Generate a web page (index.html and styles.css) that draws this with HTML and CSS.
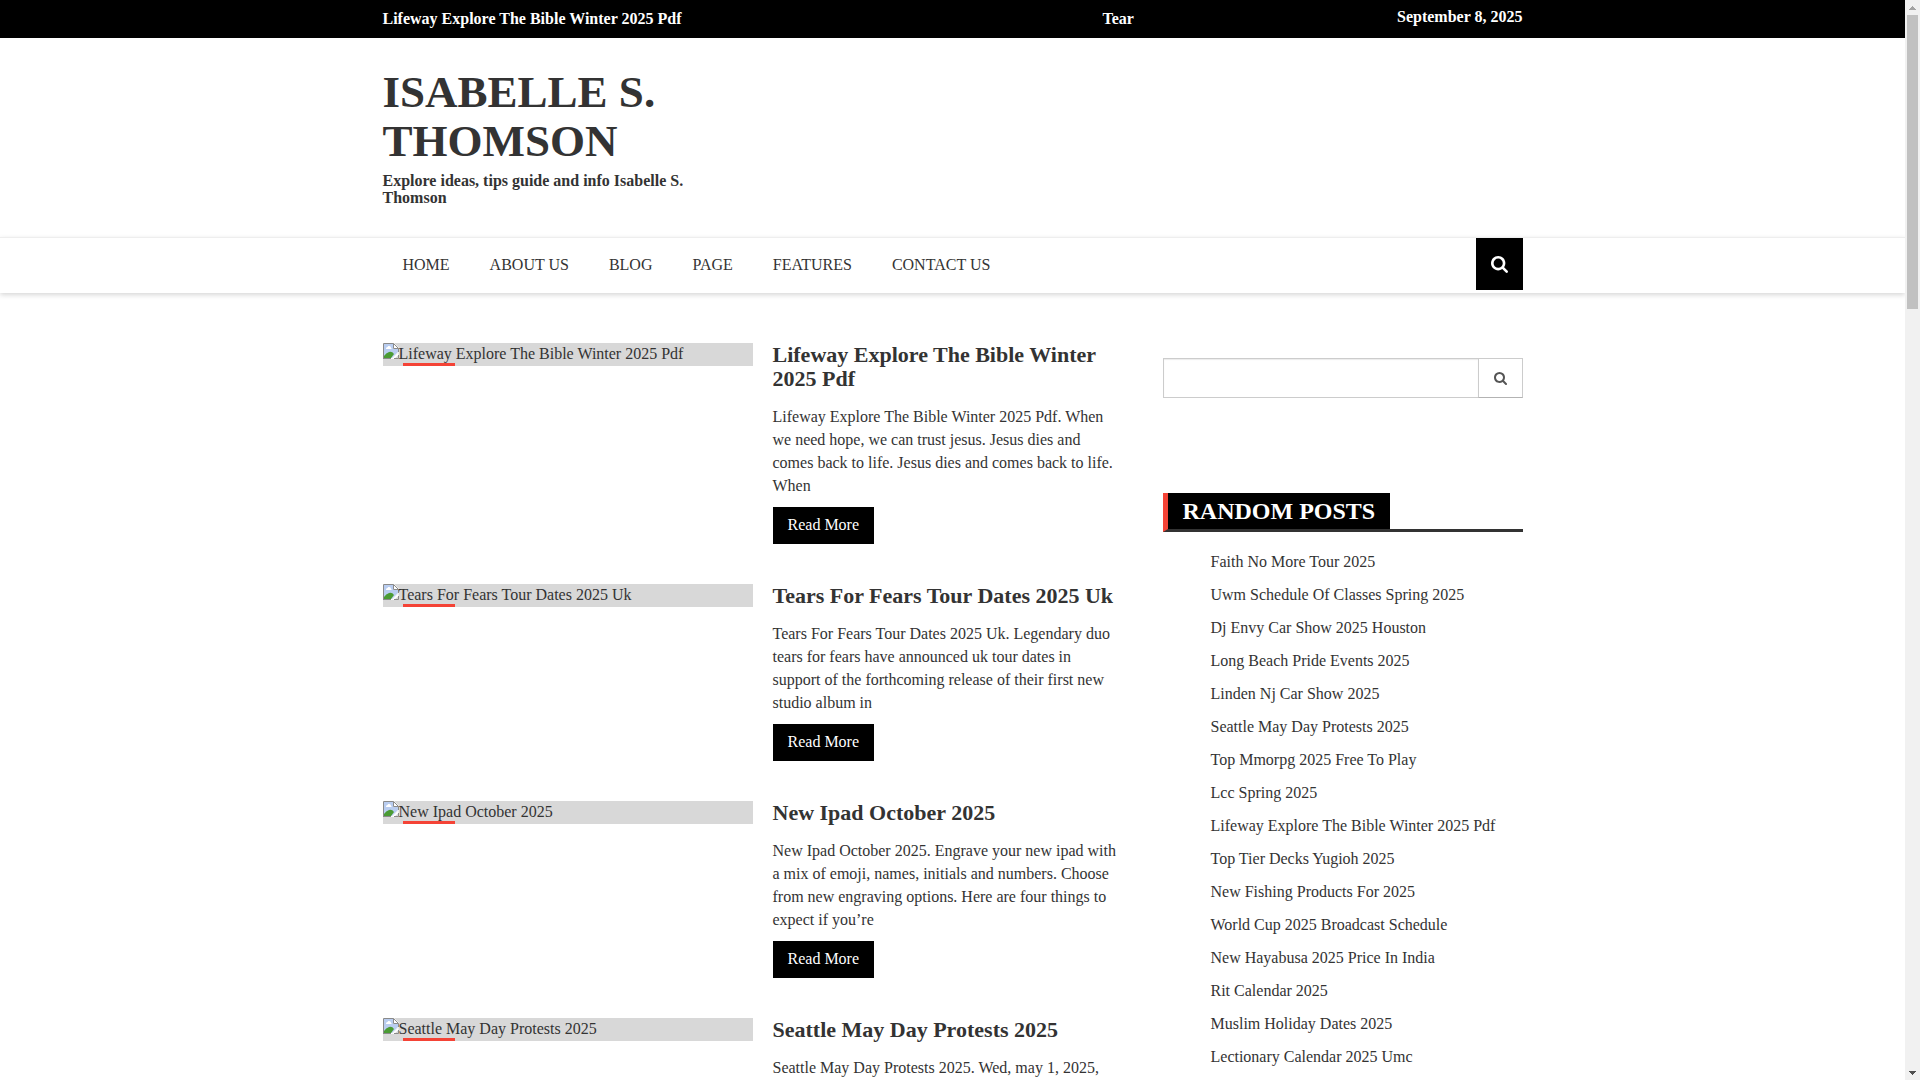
FILE: index.html
```
<!DOCTYPE html>
<html lang="en">
<head>
  <meta charset="UTF-8">
  <meta name="viewport" content="width=device-width, initial-scale=1">
  <title>Isabelle S. Thomson</title>
  <link rel="stylesheet" href="styles.css">
</head>
<body>
  <!-- Shared icons -->
  <svg class="sprite" aria-hidden="true">
    <symbol id="icon-search" viewBox="64 128 1664 1664">
      <path fill="currentColor" d="M1216 832q0-185-131.500-316.500t-316.500-131.500-316.500 131.500-131.500 316.500 131.500 316.500 316.500 131.500 316.500-131.500 131.500-316.500zm512 832q0 52-38 90t-90 38q-54 0-90-38l-343-342q-179 124-399 124-143 0-273.500-55.500t-225-150-150-225-55.500-273.500 55.500-273.500 150-225 225-150 273.500-55.500 273.500 55.500 225 150 150 225 55.500 273.500q0 220-124 399l343 343q37 37 37 90z"/>
    </symbol>
    <symbol id="icon-image" viewBox="0 0 16 16">
      <path fill="#fff" d="M0 0h11l5 5v4L9 16H0z"/>
      <path fill="#b9cdf0" d="M1 1h9v5h5v3l-6 6H1z"/>
      <path fill="#fff" d="M3 5.500q0-1.500 1.500-1.500Q5 2.500 6.200 3 8 3 7.800 4.500 9 5 8.500 6H3.500Q3 6 3 5.500z"/>
      <path fill="#4a9b34" d="M1 15v-2q2-3 5-4 3-1 5 2l-3 4z"/>
      <path fill="#fff" d="M15.500 9.500 9 16h2l4.500-4z"/>
      <path fill="none" stroke="#8a8a8a" d="M.5 16V.5h10l5 5V9M10.500.5v5h5M.5 15.500H8M11 15.500h4.500V12"/>
    </symbol>
  </svg>

  <div class="page">
    <div class="topbar">
      <div class="container topbar-inner">
        <div class="ticker">
          <a href="#">Lifeway Explore The Bible Winter 2025 Pdf</a>
          <a href="#">Tear</a>
        </div>
        <div class="date">September 8, 2025</div>
      </div>
    </div>

    <header class="header">
      <div class="container">
        <div class="branding">
          <h1><a href="#">Isabelle S. Thomson</a></h1>
          <h4>Explore ideas, tips guide and info Isabelle S. Thomson</h4>
        </div>
      </div>
    </header>

    <nav class="navbar">
      <div class="container navbar-inner">
        <ul class="menu">
          <li><a href="#">Home</a></li>
          <li><a href="#">About Us</a></li>
          <li><a href="#">Blog</a></li>
          <li><a href="#">Page</a></li>
          <li><a href="#">Features</a></li>
          <li><a href="#">Contact Us</a></li>
        </ul>
        <button class="nav-search" type="button" aria-label="Open search">
          <svg><use href="#icon-search"/></svg>
        </button>
      </div>
    </nav>

    <div class="container content">
      <main class="posts">
        <article class="post">
          <a class="thumb" href="#"><svg><use href="#icon-image"/></svg>Lifeway Explore The Bible Winter 2025 Pdf</a>
          <div class="post-body">
            <h2><a href="#">Lifeway Explore The Bible Winter 2025 Pdf</a></h2>
            <p>Lifeway Explore The Bible Winter 2025 Pdf. When we need hope, we can trust jesus. Jesus dies and comes back to life. Jesus dies and comes back to life. When</p>
            <a class="read-more" href="#">Read More</a>
          </div>
        </article>

        <article class="post">
          <a class="thumb" href="#"><svg><use href="#icon-image"/></svg>Tears For Fears Tour Dates 2025 Uk</a>
          <div class="post-body">
            <h2><a href="#">Tears For Fears Tour Dates 2025 Uk</a></h2>
            <p>Tears For Fears Tour Dates 2025 Uk. Legendary duo tears for fears have announced uk tour dates in support of the forthcoming release of their first new studio album in</p>
            <a class="read-more" href="#">Read More</a>
          </div>
        </article>

        <article class="post">
          <a class="thumb" href="#"><svg><use href="#icon-image"/></svg>New Ipad October 2025</a>
          <div class="post-body">
            <h2><a href="#">New Ipad October 2025</a></h2>
            <p>New Ipad October 2025. Engrave your new ipad with a mix of emoji, names, initials and numbers. Choose from new engraving options. Here are four things to expect if you’re</p>
            <a class="read-more" href="#">Read More</a>
          </div>
        </article>

        <article class="post">
          <a class="thumb" href="#"><svg><use href="#icon-image"/></svg>Seattle May Day Protests 2025</a>
          <div class="post-body">
            <h2><a href="#">Seattle May Day Protests 2025</a></h2>
            <p>Seattle May Day Protests 2025. Wed, may 1, 2025,</p>
          </div>
        </article>
      </main>

      <aside class="sidebar">
        <form class="search-form">
          <input type="text" name="s" aria-label="Search">
          <button type="submit" aria-label="Search"><svg><use href="#icon-search"/></svg></button>
        </form>

        <section class="widget">
          <h3><span>Random Posts</span></h3>
          <ul>
            <li><a href="#">Faith No More Tour 2025</a></li>
            <li><a href="#">Uwm Schedule Of Classes Spring 2025</a></li>
            <li><a href="#">Dj Envy Car Show 2025 Houston</a></li>
            <li><a href="#">Long Beach Pride Events 2025</a></li>
            <li><a href="#">Linden Nj Car Show 2025</a></li>
            <li><a href="#">Seattle May Day Protests 2025</a></li>
            <li><a href="#">Top Mmorpg 2025 Free To Play</a></li>
            <li><a href="#">Lcc Spring 2025</a></li>
            <li><a href="#">Lifeway Explore The Bible Winter 2025 Pdf</a></li>
            <li><a href="#">Top Tier Decks Yugioh 2025</a></li>
            <li><a href="#">New Fishing Products For 2025</a></li>
            <li><a href="#">World Cup 2025 Broadcast Schedule</a></li>
            <li><a href="#">New Hayabusa 2025 Price In India</a></li>
            <li><a href="#">Rit Calendar 2025</a></li>
            <li><a href="#">Muslim Holiday Dates 2025</a></li>
            <li><a href="#">Lectionary Calendar 2025 Umc</a></li>
          </ul>
        </section>
      </aside>
    </div>
  </div>

  <div class="scrollbar" aria-hidden="true">
    <svg class="arrow arrow-up" viewBox="0 0 7 4"><path d="M3 0h1v1h1v1h1v1h1v1H0V3h1V2h1V1h1z"/></svg>
    <div class="scroll-track"><div class="scroll-thumb"></div></div>
    <svg class="arrow arrow-down" viewBox="0 0 7 4"><path d="M0 0h7v1H6v1H5v1H4v1H3V3H2V2H1V1H0z"/></svg>
  </div>
</body>
</html>
```

FILE: styles.css
```
* {
  box-sizing: border-box;
}
body {
  display: flex;
  height: 100vh;
  margin: 0;
  overflow: hidden;
  font-family: "Liberation Serif", "Times New Roman", serif;
  font-size: 16px;
  line-height: 23px;
  color: #333;
  background: #fff;
}
a {
  color: inherit;
  text-decoration: none;
}
h1, h2, h3, h4, p, ul {
  margin: 0;
  padding: 0;
}
ul {
  list-style: none;
}
button {
  cursor: pointer;
}
svg {
  display: block;
}
.sprite {
  position: absolute;
  width: 0;
  height: 0;
}
.page {
  flex: 1;
  min-width: 0;
  overflow: hidden;
}
.container {
  max-width: 1170px;
  margin: 0 auto;
  padding: 0 15px;
}

/* Top bar */
.topbar {
  background: #000;
  color: #fff;
  font-weight: bold;
}
.topbar-inner {
  display: flex;
  justify-content: space-between;
  padding-top: 5px;
  padding-bottom: 5px;
}
.ticker {
  display: grid;
  grid-template-columns: 720px auto;
  line-height: 28px;
}

/* Header */
.header {
  padding: 30px 0;
}
.branding {
  max-width: 360px;
  padding-right: 30px;
}
.branding h1 {
  margin-bottom: 6px;
  font-size: 45px;
  line-height: 49px;
  text-transform: uppercase;
}
.branding h4 {
  padding-bottom: 1px;
  font-size: 16px;
  line-height: 17px;
}

/* Navigation */
.navbar {
  border-top: 1px solid #eee;
  box-shadow: 0 2px 5px rgba(0, 0, 0, 0.16);
}
.navbar-inner {
  display: flex;
  justify-content: space-between;
  padding-bottom: 3px;
}
.menu {
  display: flex;
}
.menu a {
  display: block;
  padding: 15px 20px 14px;
  text-transform: uppercase;
}
.nav-search {
  display: flex;
  align-items: center;
  justify-content: center;
  width: 47px;
  padding: 0;
  border: 0;
  background: #000;
  color: #fff;
}
.nav-search svg {
  width: 17px;
  height: 17px;
}

/* Posts */
.content {
  display: grid;
  grid-template-columns: 25fr 12fr;
  gap: 30px;
  padding-top: 50px;
}
.post {
  display: grid;
  grid-template-columns: 370fr 345fr;
  gap: 20px;
  align-items: start;
  margin-bottom: 40px;
  padding-right: 15px;
}
.thumb {
  display: flex;
  position: relative;
  padding-bottom: 1px;
  line-height: 22px;
  background: #d8d8d8;
}
.thumb svg {
  width: 16px;
  height: 16px;
}
/* empty category label over the thumbnail */
.thumb::after {
  content: "";
  position: absolute;
  left: 20px;
  bottom: 0;
  width: 52px;
  height: 3px;
  background: #f44336;
}
.post h2 {
  margin-bottom: 14px;
  font-size: 22px;
  line-height: 24px;
}
.post p {
  margin-bottom: 10px;
}
.read-more {
  display: block;
  width: fit-content;
  padding: 6px 15px 8px;
  background: #000;
  color: #fff;
}

/* Sidebar */
.sidebar {
  padding-top: 15px;
}
.search-form {
  display: flex;
  height: 40px;
  margin-bottom: 95px;
}
.search-form input {
  flex: 1;
  min-width: 0;
  padding: 6px 12px;
  border: 1px solid #ccc;
  border-right: 0;
  font: inherit;
  box-shadow: inset 0 1px 1px rgba(0, 0, 0, 0.08);
}
.search-form button {
  display: flex;
  align-items: center;
  justify-content: center;
  width: 45px;
  padding: 0;
  border: 1px solid #ccc;
  border-bottom-color: #b3b3b3;
  background: #fff;
  color: #555;
}
.search-form svg {
  width: 13px;
  height: 13px;
}
.widget h3 {
  display: flex;
  margin-bottom: 18px;
  border-left: 5px solid #f44336;
  border-bottom: 3px solid #333;
  font-size: 24px;
  line-height: 26px;
  text-transform: uppercase;
}
.widget h3 span {
  padding: 5px 15px;
  background: #000;
  color: #fff;
}
.widget li {
  margin-bottom: 10px;
  padding-left: 48px;
}

/* Scrollbar */
.scrollbar {
  display: flex;
  flex-direction: column;
  align-items: center;
  width: 15px;
  padding: 6px 0 5px;
  background: #f1f1f1;
}
.arrow {
  width: 7px;
  height: 4px;
}
.arrow-up {
  fill: #a3a3a3;
}
.arrow-down {
  fill: #505050;
}
.scroll-track {
  flex: 1;
  padding: 5px 0;
}
.scroll-thumb {
  width: 11px;
  height: 28%;
  background: #c1c1c1;
}
```
